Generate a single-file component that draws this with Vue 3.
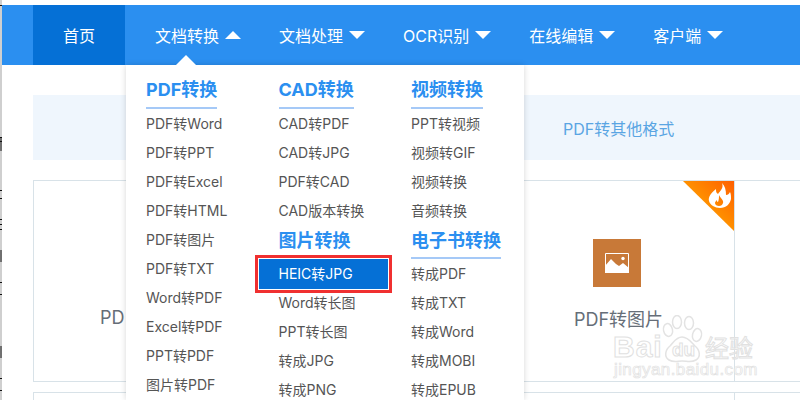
<script setup>
const nav = [
  { label: '文档转换', open: true },
  { label: '文档处理' },
  { label: 'OCR识别' },
  { label: '在线编辑' },
  { label: '客户端' },
]
const columns = [
  [
    { title: 'PDF转换', items: ['PDF转Word', 'PDF转PPT', 'PDF转Excel', 'PDF转HTML', 'PDF转图片', 'PDF转TXT', 'Word转PDF', 'Excel转PDF', 'PPT转PDF', '图片转PDF'] },
  ],
  [
    { title: 'CAD转换', items: ['CAD转PDF', 'CAD转JPG', 'PDF转CAD', 'CAD版本转换'] },
    { title: '图片转换', plain: true, items: ['HEIC转JPG', 'Word转长图', 'PPT转长图', '转成JPG', '转成PNG'] },
  ],
  [
    { title: '视频转换', items: ['PPT转视频', '视频转GIF', '视频转换', '音频转换'] },
    { title: '电子书转换', items: ['转成PDF', '转成TXT', '转成Word', '转成MOBI', '转成EPUB'] },
  ],
]
</script>

<template>
  <div class="page">
    <svg class="edge" width="2" height="400" viewBox="0 0 2 400">
      <rect width="2" height="400" fill="#cfcfcf" />
      <path d="M0 5.5H2M0 137.5H2M0 141.5H2M1 137V151M0 190.5H2M0 198.5H2M0 219.5H2M0 224.5H2M0 229.5H2M1 250V262M0 282.5H2M0 294.5H2M1 346V358M0 378.5H2M0 390.5H2" stroke="#111" fill="none" />
    </svg>
    <header class="bar">
      <a class="home">首页</a>
      <div class="nav">
        <a v-for="n in nav" :key="n.label" class="nav-item">
          {{ n.label }}
          <svg class="caret" width="16" height="8" viewBox="0 0 16 8">
            <path :d="n.open ? 'M8 0L16 8H0Z' : 'M0 0H16L8 8Z'" fill="#fff" />
          </svg>
        </a>
      </div>
    </header>

    <div class="content">
      <div class="tabs">
        <span class="tab-text">PDF转其他格式</span>
      </div>
      <div class="cards">
        <div class="card first">
          <span class="card-label first-label">PD</span>
        </div>
        <div class="card second">
          <div class="hot">
            <svg width="51" height="50" viewBox="0 0 51 50">
              <defs>
                <linearGradient id="hotfill" x1="0.25" y1="0.75" x2="1" y2="0">
                  <stop offset="0" stop-color="#ffa800" />
                  <stop offset="1" stop-color="#ff5f00" />
                </linearGradient>
              </defs>
              <path d="M0 0H51V50Z" fill="url(#hotfill)" />
              <path d="M39 2C41 7 37 10 35 13C33 12 33 10 33 8C28 12 25 16 26 20C27 24 32 27 37 27C43 27 47 23 48 18C48 15 48 13 47 11C46 13 45 14 43 14C43 9 42 5 39 2ZM36 14C37 17 41 19 40 22C39.5 24 38 25 36 25C34 25 32 24 32 22C32 21 33 20 34 19C34 20 34 21 35 21C36 19 36 16 36 14Z" fill="#fff" fill-rule="evenodd" />
            </svg>
          </div>
          <div class="img-icon">
            <svg width="24" height="20" viewBox="0 0 24 20">
              <path d="M0.5 0.5H23.5V19.5H0.5Z" fill="none" stroke="#fff" />
              <path d="M0 19V13L6 6L11 11L14 13L18 10L24 15V20H0Z" fill="#fff" />
              <circle cx="18" cy="5.5" r="1.7" fill="#fff" />
            </svg>
          </div>
          <span class="card-label shifted">PDF转图片</span>
        </div>
        <div class="card third"></div>
      </div>
      <div class="cards lower">
        <div class="card first"></div>
        <div class="card second"></div>
        <div class="card third"></div>
      </div>
    </div>

    <div class="menu">
      <i class="notch"></i>
      <div v-for="(col, ci) in columns" :key="ci" class="col">
        <section v-for="g in col" :key="g.title" class="group">
          <h3 class="group-title" :class="{ plain: g.plain }">{{ g.title }}</h3>
          <a v-for="it in g.items" :key="it" class="link" :class="{ active: it === 'HEIC转JPG' }">{{ it }}</a>
        </section>
      </div>
    </div>

    <div class="mark">
      <svg width="44" height="50" viewBox="0 0 44 50" class="paw">
        <g fill="rgba(255,255,255,0.55)" stroke="#e3e3e3" stroke-width="1.5">
          <ellipse cx="8" cy="15" rx="4.5" ry="6.5" transform="rotate(-12 8 15)" />
          <ellipse cx="17" cy="7" rx="4.5" ry="6.5" />
          <ellipse cx="29" cy="8" rx="4.5" ry="6.5" />
          <ellipse cx="37" cy="20" rx="4.5" ry="6.5" transform="rotate(12 37 20)" />
          <path d="M22 22C16 22 14 27 10 31C5 35 4 42 9 45C14 48 18 46 22 46C27 46 31 48 36 45C41 42 40 35 35 31C31 27 28 22 22 22Z" />
        </g>
      </svg>
      <span class="mark-bai">Bai</span>
      <span class="mark-du">du</span>
      <span class="mark-cn">经验</span>
      <span class="mark-url">jingyan.baidu.com</span>
    </div>
  </div>
</template>

<style scoped>
.page {
  position: relative;
  width: 800px;
  height: 400px;
  padding-top: 5px;
  box-sizing: border-box;
  overflow: hidden;
  background: #fff;
  font-family: Inter, "Noto Sans CJK SC", sans-serif;
}
.edge {
  position: absolute;
  left: 0;
  top: 0;
}
.bar {
  margin-left: 2px;
  height: 60px;
  background: #2b8ff0;
  display: flex;
  padding-left: 31px;
  color: #fff;
  font-size: 16px;
}
.home {
  width: 92px;
  background: #0570d6;
  display: flex;
  align-items: center;
  justify-content: center;
}
.nav {
  display: flex;
  gap: 38px;
  padding-left: 30px;
}
.nav-item {
  display: flex;
  align-items: center;
  gap: 6px;
  white-space: nowrap;
}
.caret { flex: none; }

.content {
  padding: 30px 0 0 31px;
  margin-left: 2px;
}
.tabs {
  height: 65px;
  background: #eff6fd;
  display: flex;
  align-items: center;
  padding-left: 530px;
}
.tab-text {
  color: #5aa5e3;
  font-size: 16px;
}
.cards {
  display: flex;
  height: 202px;
  margin-top: 20px;
  margin-right: -40px;
  border: 1px solid #d8e2e8;
  box-sizing: border-box;
}
.cards.lower {
  margin-top: 10px;
}
.card {
  position: relative;
  box-sizing: border-box;
  display: flex;
  flex-direction: column;
  align-items: center;
}
.card.first { width: 467px; }
.card.second {
  width: 234px;
  border-right: 1px solid #d8e2e8;
  padding-top: 58px;
}
.first-label {
  position: absolute;
  left: 66px;
  top: 124px;
}
.card-label {
  font-size: 18px;
  color: #666e78;
  line-height: 26px;
}
.card-label.shifted {
  margin-left: 2px;
}
.hot {
  position: absolute;
  right: 0;
  top: 0;
  display: flex;
}
.img-icon {
  width: 48px;
  height: 48px;
  background: #c87938;
  display: flex;
  align-items: center;
  justify-content: center;
  margin-right: 2px;
  margin-bottom: 20px;
}

.menu {
  position: absolute;
  left: 126px;
  top: 65px;
  width: 398px;
  height: 335px;
  background: #fff;
  box-shadow: 0 0 6px rgba(0, 0, 0, 0.16);
  display: flex;
  box-sizing: border-box;
  padding-left: 20px;
}
.notch {
  position: absolute;
  left: 50px;
  top: -10px;
  width: 0;
  height: 0;
  border-left: 10px solid transparent;
  border-right: 10px solid transparent;
  border-bottom: 10px solid #fff;
}
.col {
  flex: none;
  width: 132.5px;
}
.group-title {
  margin: 0;
  display: inline-block;
  font-size: 18px;
  font-weight: 700;
  line-height: 25px;
  color: #2b8ff0;
  padding-top: 12px;
  padding-bottom: 5px;
  border-bottom: 2px solid #a5c9f7;
  white-space: nowrap;
  vertical-align: top;
}
.group + .group .group-title {
  margin-top: 3px;
  padding-top: 0;
  padding-bottom: 4px;
}
.group + .group .group-title.plain {
  border-bottom: 0;
  padding-bottom: 0;
  margin-bottom: 6px;
}
.link {
  display: block;
  height: 29px;
  line-height: 29px;
  font-size: 14px;
  color: #555;
  white-space: nowrap;
}
.link.active {
  width: 129px;
  margin-left: -20px;
  margin-bottom: -1px;
  padding-left: 20px;
  box-sizing: border-box;
  background: #0570d6;
  color: #fff;
  height: 30px;
  line-height: 29px;
  outline: 3px solid #f03030;
  outline-offset: 1px;
}

.mark {
  position: absolute;
  left: 613px;
  top: 315px;
  width: 150px;
  height: 70px;
}
.mark span {
  position: absolute;
  color: rgba(255, 255, 255, 0.55);
  -webkit-text-stroke: 1px #e1e1e1;
  white-space: nowrap;
  font-family: "Liberation Sans", sans-serif;
}
.paw {
  position: absolute;
  left: 47px;
  top: 0;
}
.mark span.mark-bai {
  left: 0;
  top: 17px;
  font-size: 30px;
  line-height: 30px;
  font-weight: 700;
  letter-spacing: 1px;
}
.mark span.mark-du {
  left: 59px;
  top: 25px;
  font-size: 19px;
  line-height: 20px;
  font-weight: 700;
}
.mark span.mark-cn {
  left: 92px;
  top: 20px;
  font-family: "Noto Sans CJK SC", sans-serif;
  font-size: 24px;
  line-height: 24px;
}
.mark span.mark-url {
  left: 1px;
  top: 45px;
  font-size: 17px;
  line-height: 20px;
  letter-spacing: 0.4px;
  -webkit-text-stroke: 0.7px #e1e1e1;
}
</style>
